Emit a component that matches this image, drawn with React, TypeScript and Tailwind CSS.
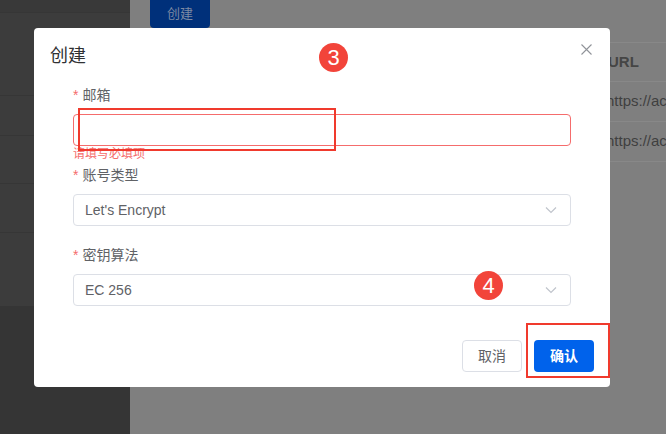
import React from "react";

const font = { fontFamily: '"Liberation Sans", Arial, "Noto Sans CJK SC", sans-serif' };

function Chevron() {
  return (
    <svg width="12" height="8" viewBox="0 0 12 8" fill="none">
      <path d="M1 1.5 L6 6.5 L11 1.5" stroke="#c0c4cc" strokeWidth="1.2" />
    </svg>
  );
}

function Label({ text }: { text: string }) {
  return (
    <div className="h-[22px] leading-[22px] text-[14px] text-[#606266] flex items-center">
      <span className="text-[#f56c6c] mr-[4px] text-[14px]">*</span>
      <span>{text}</span>
    </div>
  );
}

function Select({ value }: { value: string }) {
  return (
    <div className="h-[32px] w-[498px] rounded-[4px] border border-[#dcdfe6] flex items-center justify-between pl-[11px] pr-[13px] text-[14px] text-[#606266]">
      <span>{value}</span>
      <Chevron />
    </div>
  );
}

export default function App() {
  return (
    <div className="relative w-[666px] h-[434px] overflow-hidden flex" style={font}>
      {/* sidebar (dimmed) */}
      <div className="w-[130px] shrink-0 h-full bg-[#3c3c3c] flex flex-col">
        <div className="h-[13px] bg-[#393939] border-b border-[#363636]" />
        <div className="h-[83px] border-b border-[#363636]" />
        <div className="h-[40px] border-b border-[#363636]" />
        <div className="h-[48px] border-b border-[#363636]" />
        <div className="h-[49px] border-b border-[#363636]" />
        <div className="h-[73px]" />
        <div className="flex-1 bg-[#353535]" />
      </div>
      {/* main (dimmed) */}
      <div className="flex-1 min-w-0 h-full bg-[#7f7f7f] relative overflow-hidden">
        <div className="ml-[20px] w-[60px] h-[28px] bg-[#00307a] rounded-b-[4px] flex items-center justify-center text-[13px] text-[#7d8aa3]">
          创建
        </div>
        <div className="mt-[14px] ml-[470px] w-[66px] text-[#3f3f3f]">
          <div className="h-[40px] border-y border-[#888888] flex items-center pl-[8px] font-bold text-[15px] text-[#454545]">
            URL
          </div>
          <div className="h-[40px] border-b border-[#888888] flex items-center pl-[6px] text-[15px] whitespace-nowrap overflow-hidden">
            https://ac
          </div>
          <div className="h-[40px] border-b border-[#888888] flex items-center pl-[6px] text-[15px] whitespace-nowrap overflow-hidden">
            https://ac
          </div>
        </div>
      </div>

      {/* modal */}
      <div className="absolute left-[34px] top-[28px] w-[576px] h-[359px] bg-white rounded-[4px] flex flex-col">
        <div className="h-[40px] pt-[16px] pl-[16px] text-[18px] leading-[24px] text-[#303133]">创建</div>
        <svg className="absolute left-[547px] top-[16px]" width="11" height="11" viewBox="0 0 11 11">
          <path d="M0.5 0.5 L10.5 10.5 M10.5 0.5 L0.5 10.5" stroke="#909399" strokeWidth="1.1" />
        </svg>
        <div className="ml-[39px] mt-[16px] flex flex-col">
          <Label text="邮箱" />
          <div className="mt-[8px] h-[32px] w-[498px] rounded-[4px] border border-[#f56c6c]" />
          <div className="h-[16px] leading-[16px] text-[12px] text-[#f56c6c]">请填写必填项</div>
          <div className="mt-[2px]">
            <Label text="账号类型" />
          </div>
          <div className="mt-[8px]">
            <Select value="Let's Encrypt" />
          </div>
          <div className="mt-[18px]">
            <Label text="密钥算法" />
          </div>
          <div className="mt-[8px]">
            <Select value="EC 256" />
          </div>
        </div>
        <div className="mt-[34px] mr-[16px] flex justify-end gap-[12px]">
          <button className="w-[60px] h-[32px] rounded-[4px] border border-[#dcdfe6] bg-white text-[14px] text-[#606266]">
            取消
          </button>
          <button className="w-[60px] h-[32px] rounded-[4px] bg-[#0062eb] text-[14px] text-white font-bold">
            确认
          </button>
        </div>
      </div>

      {/* annotations */}
      <div className="absolute left-[319px] top-[43px] w-[29px] h-[29px] rounded-full bg-[#f2443a] text-white text-[22px] leading-[29px] text-center">
        3
      </div>
      <div className="absolute left-[474px] top-[271px] w-[29px] h-[29px] rounded-full bg-[#f2443a] text-white text-[22px] leading-[29px] text-center">
        4
      </div>
      <div className="absolute left-[78px] top-[108px] w-[258px] h-[43px] border-[2px] border-[#f03a2d]" />
      <div className="absolute left-[526px] top-[323px] w-[84px] h-[55px] border-[2px] border-[#f03a2d]" />
    </div>
  );
}
